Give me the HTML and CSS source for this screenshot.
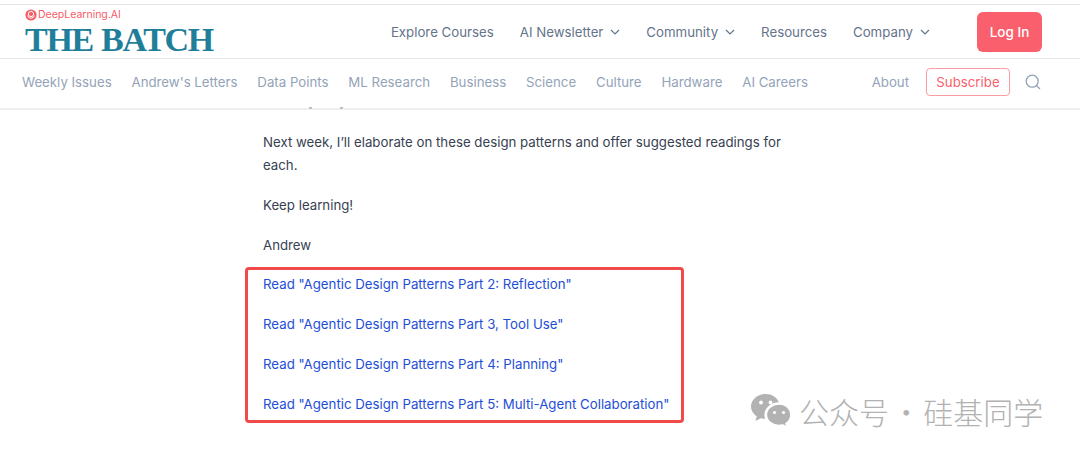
FILE: index.html
```html
<!DOCTYPE html>
<html lang="en">

<head>
  <meta charset="UTF-8">
  <meta name="viewport" content="width=device-width, initial-scale=1.0">
  <title>The Batch</title>
  <link rel="stylesheet" href="styles.css">
</head>

<body>
  <header class="topbar">
    <div class="brand">
      <div class="brand-top">
        <svg class="brand-icon" viewBox="0 0 12 12">
          <circle cx="6" cy="6" r="5.6" fill="#f65b66" />
          <circle cx="6" cy="5" r="2.6" fill="none" stroke="#fff" stroke-width="1" />
          <path d="M2.6 6.6a3.5 3.5 0 0 0 6.8 0" fill="none" stroke="#fff" stroke-width="1" />
        </svg>
        <span>DeepLearning.AI</span>
      </div>
      <div class="brand-title">THE BATCH</div>
    </div>
    <nav class="mainnav">
      <a>Explore Courses</a>
      <a>AI Newsletter<svg class="chev" viewBox="0 0 10 6"><path d="M1 1l4 4 4-4" /></svg></a>
      <a>Community<svg class="chev" viewBox="0 0 10 6"><path d="M1 1l4 4 4-4" /></svg></a>
      <a>Resources</a>
      <a>Company<svg class="chev" viewBox="0 0 10 6"><path d="M1 1l4 4 4-4" /></svg></a>
    </nav>
    <a class="login">Log In</a>
  </header>

  <div class="subnav">
    <nav class="topics">
      <a>Weekly Issues</a>
      <a>Andrew's Letters</a>
      <a>Data Points</a>
      <a>ML Research</a>
      <a>Business</a>
      <a>Science</a>
      <a>Culture</a>
      <a>Hardware</a>
      <a>AI Careers</a>
    </nav>
    <div class="subnav-right">
      <a>About</a>
      <a class="subscribe">Subscribe</a>
      <svg class="search" viewBox="0 0 16 16"><circle cx="7.2" cy="7.2" r="6" /><path d="M11.6 11.6l3.4 3.4" /></svg>
    </div>
  </div>

  <main class="article">
    <p>Next week, I’ll elaborate on these design patterns and offer suggested readings for each.</p>
    <p>Keep learning!</p>
    <p>Andrew</p>
    <p><a>Read "Agentic Design Patterns Part 2: Reflection"</a></p>
    <p><a>Read "Agentic Design Patterns Part 3, Tool Use"</a></p>
    <p><a>Read "Agentic Design Patterns Part 4: Planning"</a></p>
    <p><a>Read "Agentic Design Patterns Part 5: Multi-Agent Collaboration"</a></p>
  </main>

  <!-- descenders of the line scrolled away under the nav -->
  <span class="descender first"></span>
  <span class="descender second"></span>

  <div class="highlight"></div>

  <div class="watermark">
    <svg class="wechat" viewBox="0 0 42 36">
      <path d="M16 1C7.700 1 1 6.600 1 13.600c0 4 2.200 7.500 5.700 9.800L5.500 28l5.300-2.800c1.400.4 2.800.6 4.300.7-.5-1.300-.7-2.600-.7-4 0-7 6.500-12.500 14.500-12.700C26.700 4.300 21.800 1 16 1z" />
      <path d="M29 11c-7 0-12.600 4.800-12.600 10.700S22 32.400 29 32.400c1.300 0 2.500-.2 3.700-.5l4.300 2.500-1-3.900c3-2 4.900-5.200 4.900-8.800C40.900 15.800 36 11 29 11z" stroke="#fff" stroke-width="1.500" />
      <circle cx="11" cy="9.500" r="1.900" fill="#fff" />
      <circle cx="20.500" cy="9.500" r="1.900" fill="#fff" />
      <circle cx="24.500" cy="19.500" r="1.600" fill="#fff" />
      <circle cx="33.500" cy="19.500" r="1.600" fill="#fff" />
    </svg>
    <span>公众号 · 硅基同学</span>
  </div>
</body>

</html>
```

FILE: styles.css
```css
* {
  box-sizing: border-box;
}

body {
  margin: 0;
  height: 456px;
  overflow: hidden;
  position: relative;
  background: #fff;
  font-family: Inter, "Liberation Sans", sans-serif;
  padding-top: 4px;
}

.topbar {
  height: 55px;
  display: flex;
  align-items: center;
  padding: 0 38px 0 25px;
  border-top: 1px solid #e5e5e5;
  border-bottom: 1px solid #e8e8e8;
}

.brand {
  display: flex;
  flex-direction: column;
  margin-right: auto;
}

.brand-top {
  display: flex;
  align-items: center;
  gap: 1px;
  font-size: 10.500px;
  line-height: 12px;
  color: #f65b66;
}

.brand-icon {
  width: 12px;
  height: 12px;
}

.brand-title {
  margin-top: 4px;
  font-family: "Liberation Serif", serif;
  font-weight: 700;
  font-size: 34px;
  line-height: 30px;
  letter-spacing: -1.300px;
  word-spacing: 1px;
  color: #1f7f9a;
}

.mainnav {
  display: flex;
  gap: 26px;
  margin-right: 47px;
  font-size: 13.250px;
  color: #64748b;
}

.mainnav a {
  display: flex;
  align-items: center;
}

.chev {
  width: 10px;
  height: 6px;
  margin-left: 7px;
  fill: none;
  stroke: #64748b;
  stroke-width: 1.200;
}

.login {
  width: 65px;
  height: 40px;
  display: flex;
  align-items: center;
  justify-content: center;
  background: #f95f6d;
  border-radius: 6px;
  color: #fff;
  font-size: 13.500px;
  font-weight: 500;
}

.subnav {
  height: 51px;
  display: flex;
  align-items: center;
  justify-content: space-between;
  padding: 0 39px 4px 22px;
  border-bottom: 2px solid #eeeeee;
  font-size: 13.250px;
  color: #94a3b8;
}

.topics {
  display: flex;
  gap: 19.850px;
}

.subnav-right {
  display: flex;
  align-items: center;
}

.subscribe {
  margin-left: 17px;
  width: 84px;
  height: 28px;
  display: flex;
  align-items: center;
  justify-content: center;
  border: 1px solid #fa9ca4;
  border-radius: 4px;
  color: #f95f6d;
}

.search {
  width: 16px;
  height: 16px;
  margin-left: 15px;
  fill: none;
  stroke: #94a3b8;
  stroke-width: 1.300;
}

.article {
  width: 540px;
  margin-left: 263px;
  padding-top: 21px;
  font-size: 13.250px;
  line-height: 23px;
  color: #374151;
}

.article p {
  margin: 0 0 16.800px;
}

.article a {
  color: #1d4ed8;
}

.descender {
  position: absolute;
  top: 107px;
  width: 3px;
  height: 2px;
  background: #b5bac2;
  border-radius: 0 0 2px 2px;
}

.descender.first {
  left: 309px;
}

.descender.second {
  left: 340px;
}

.highlight {
  position: absolute;
  left: 245px;
  top: 267px;
  width: 439px;
  height: 156px;
  border: 3px solid #f04a4a;
  border-radius: 4px;
}

.watermark {
  position: absolute;
  left: 750px;
  top: 392px;
  display: flex;
  align-items: center;
  gap: 7px;
  font-family: "Noto Sans CJK SC", sans-serif;
  font-size: 30px;
  font-weight: 300;
  word-spacing: -4.500px;
  line-height: 38px;
  color: #b2b2b2;
}

.wechat {
  width: 42px;
  height: 36px;
  fill: #b2b2b2;
}
```
